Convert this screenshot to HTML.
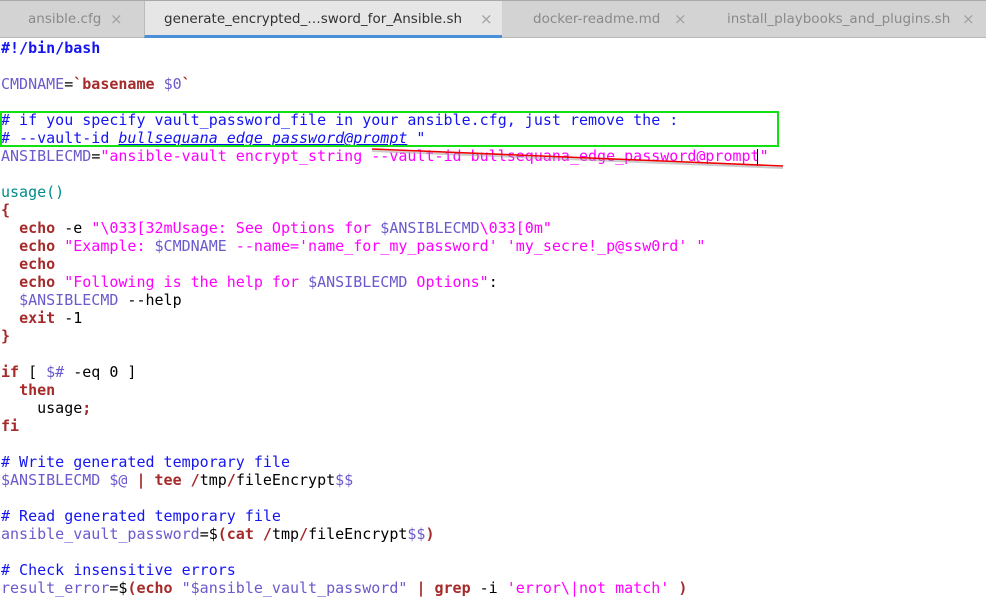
<!DOCTYPE html>
<html><head><meta charset="utf-8"><style>
body{margin:0;width:986px;height:616px;background:#fff;overflow:hidden;position:relative}
.tabs{position:absolute;left:0;top:0;width:986px;height:38px;background:#d3d3d3;border-top:1px solid #a8a8a8;border-bottom:1px solid #b8b8b8;box-sizing:border-box;font-family:"DejaVu Sans","Liberation Sans",sans-serif;font-size:13.5px;color:#8a8a8a}
.tab{position:absolute;top:0;height:37px;line-height:37px;white-space:nowrap}
.tab span.x{position:absolute;color:#a0a0a0;font-size:15px}
.active{background:#e6e6e6;color:#333;border-bottom:3px solid #4a90d9;box-sizing:border-box;border-left:1px solid #bbb}
.code{position:absolute;left:1px;top:39px;font-family:"DejaVu Sans Mono","Liberation Mono",monospace;font-size:15px;line-height:18px;white-space:pre;color:#000}
.c{color:#1515f0}.k{color:#a52a2a;font-weight:bold}.v{color:#6a5acd}.s{color:#ff00ff}.f{color:#008b8b}
</style></head><body>
<div class="tabs">
<div class="tab" style="left:0;width:144px"><span style="position:absolute;left:28px">ansible.cfg</span><span class="x" style="left:110px">×</span></div>
<div class="tab active" style="left:144px;width:358px"><span style="position:absolute;left:19px">generate_encrypted_…sword_for_Ansible.sh</span><span class="x" style="left:335px">×</span></div>
<div class="tab" style="left:502px;width:200px"><span style="position:absolute;left:31px">docker-readme.md</span><span class="x" style="left:172px">×</span></div>
<div class="tab" style="left:702px;width:284px"><span style="position:absolute;left:25px">install_playbooks_and_plugins.sh</span><span class="x" style="left:260px">×</span></div>
</div>
<div class="code"><span class="c" style="font-weight:bold">#!/bin/bash</span>

<span class="v">CMDNAME</span>=<span class="k">`basename</span> <span class="v">$0</span><span class="k">`</span>

<span class="c"># if you specify vault_password_file in your ansible.cfg, just remove the :</span>
<span class="c"># --vault-id <i style="text-decoration:underline">bullsequana_edge_password@prompt</i> "</span>
<span class="v">ANSIBLECMD</span>=<span class="s">"ansible-vault encrypt_string --vault-id bullsequana_edge_password@prompt"</span>

<span class="f">usage()</span>
<span class="k">{</span>
  <span class="k">echo</span> -e <span class="s">"\033[32mUsage: See Options for </span><span class="v">$ANSIBLECMD</span><span class="s">\033[0m"</span>
  <span class="k">echo</span> <span class="s">"Example: </span><span class="v">$CMDNAME</span><span class="s"> --name='name_for_my_password' 'my_secre!_p@ssw0rd' "</span>
  <span class="k">echo</span>
  <span class="k">echo</span> <span class="s">"Following is the help for </span><span class="v">$ANSIBLECMD</span><span class="s"> Options"</span>:
  <span class="v">$ANSIBLECMD</span> --help
  <span class="k">exit</span> -1
<span class="k">}</span>

<span class="k">if</span> [ <span class="v">$#</span> -eq 0 ]
  <span class="k">then</span>
    usage<span class="k">;</span>
<span class="k">fi</span>

<span class="c"># Write generated temporary file</span>
<span class="v">$ANSIBLECMD</span> <span class="v">$@</span> <span class="k">|</span> <span class="k">tee</span> <span class="k">/</span>tmp<span class="k">/</span>fileEncrypt<span class="v">$$</span>

<span class="c"># Read generated temporary file</span>
<span class="v">ansible_vault_password</span>=$<span class="k">(cat</span> <span class="k">/</span>tmp<span class="k">/</span>fileEncrypt<span class="v">$$</span><span class="k">)</span>

<span class="c"># Check insensitive errors</span>
<span class="v">result_error</span>=$<span class="k">(echo</span> <span class="v">"$ansible_vault_password"</span> <span class="k">|</span> <span class="k">grep</span> -i <span class="s">'error\|not match'</span> <span class="k">)</span></div>
<div style="position:absolute;left:0;top:111px;width:779px;height:36px;border:2px solid #11e011;box-sizing:border-box"></div>
<div style="position:absolute;left:757px;top:149px;width:1px;height:17px;background:#000"></div>
<svg style="position:absolute;left:0;top:0" width="986" height="616"><line x1="372" y1="151" x2="783" y2="168" stroke="#999" stroke-width="2" opacity=".5"/><line x1="372" y1="149" x2="783" y2="166" stroke="#e00" stroke-width="1.6"/></svg>
</body></html>
